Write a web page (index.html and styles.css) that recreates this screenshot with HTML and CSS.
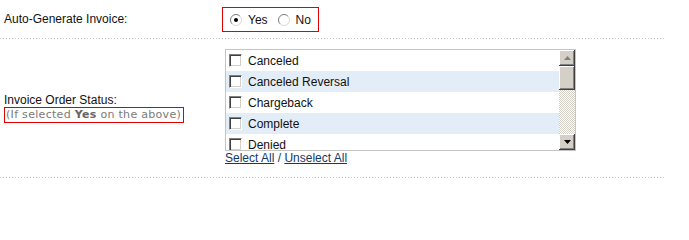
FILE: index.html
```html
<!DOCTYPE html>
<html>
<head>
<meta charset="utf-8">
<link rel="stylesheet" href="styles.css">
</head>
<body>
<div class="form">
  <div class="row">
    <div class="label">Auto-Generate Invoice:</div>
    <div class="field field-radio">
      <div class="radio-box">
        <label class="radio-item">
          <svg class="radio" width="12" height="12" viewBox="0 0 12 12"><circle cx="6" cy="6" r="5.5" fill="#fff"/><path d="M2.11 9.89 A5.5 5.5 0 0 1 9.89 2.11" fill="none" stroke="#7a7a7a"/><path d="M9.89 2.11 A5.5 5.5 0 0 1 2.11 9.89" fill="none" stroke="#d8d8d8"/><circle cx="6" cy="6" r="2" fill="#000"/></svg>
          <span>Yes</span>
        </label>
        <label class="radio-item">
          <svg class="radio" width="12" height="12" viewBox="0 0 12 12"><circle cx="6" cy="6" r="5.5" fill="#fff"/><path d="M2.11 9.89 A5.5 5.5 0 0 1 9.89 2.11" fill="none" stroke="#7a7a7a"/><path d="M9.89 2.11 A5.5 5.5 0 0 1 2.11 9.89" fill="none" stroke="#d8d8d8"/></svg>
          <span>No</span>
        </label>
      </div>
    </div>
  </div>
  <div class="row">
    <div class="label">
      <div>Invoice Order Status:</div>
      <div><span class="hint">(If selected <b>Yes</b> on the above)</span></div>
    </div>
    <div class="field field-list">
      <div class="listbox">
        <div class="options">
          <div class="opt"><span class="check"></span><span>Canceled</span></div>
          <div class="opt alt"><span class="check"></span><span>Canceled Reversal</span></div>
          <div class="opt"><span class="check"></span><span>Chargeback</span></div>
          <div class="opt alt"><span class="check"></span><span>Complete</span></div>
          <div class="opt"><span class="check"></span><span>Denied</span></div>
        </div>
        <div class="scrollbar">
          <div class="sb-btn"><svg width="7" height="4" viewBox="0 0 7 4"><polygon points="3.5,0 7,4 0,4" fill="#808080"/></svg></div>
          <div class="sb-thumb"></div>
          <div class="sb-track"></div>
          <div class="sb-btn"><svg width="7" height="4" viewBox="0 0 7 4"><polygon points="0,0 7,0 3.5,4" fill="#000"/></svg></div>
        </div>
      </div>
      <div class="links"><a href="#">Select All</a> / <a href="#">Unselect All</a></div>
    </div>
  </div>
</div>
</body>
</html>
```

FILE: styles.css
```css
html, body {
  margin: 0;
  padding: 0;
  background: #fff;
}

body {
  font-family: "Liberation Sans", Arial, sans-serif;
  font-size: 12px;
  line-height: 14px;
  color: #111;
}

.form {
  width: 665px;
}

.row {
  display: flex;
  padding-bottom: 1px;
  background-image: repeating-linear-gradient(to right, #c4c4c4 0 1px, transparent 1px 3px);
  background-size: 100% 1px;
  background-position: left bottom;
  background-repeat: no-repeat;
}

.label {
  width: 222px;
  flex: none;
  box-sizing: border-box;
  padding-left: 4px;
  display: flex;
  flex-direction: column;
  justify-content: center;
}

.field {
  flex: 1;
}

.field-radio {
  padding: 7px 0 6px 0;
}

.radio-box {
  display: inline-flex;
  align-items: center;
  box-sizing: border-box;
  height: 25px;
  border: 1px solid #e00000;
  padding: 0 7px 0 7px;
  gap: 10px;
}

.radio-item {
  display: inline-flex;
  align-items: center;
  gap: 6px;
}

.radio {
  display: block;
}

.hint {
  display: inline-block;
  border: 1px solid #e00000;
  padding: 0 2px 0 1px;
  font-family: "DejaVu Sans", Verdana, sans-serif;
  font-size: 11px;
  letter-spacing: 0.3px;
  line-height: 14px;
  color: #7a7a7a;
}

.hint b {
  color: #666;
}

.field-list {
  padding: 10px 0 12px 3px;
}

.listbox {
  display: flex;
  box-sizing: border-box;
  width: 351px;
  height: 102px;
  border: 1px solid #c4c4c4;
  overflow: hidden;
}

.options {
  flex: 1;
}

.opt {
  display: flex;
  align-items: center;
  height: 21px;
  padding-left: 3px;
  gap: 6px;
  color: #111;
}

.opt.alt {
  background: #e3edf7;
}

.check {
  display: block;
  box-sizing: border-box;
  width: 13px;
  height: 13px;
  background: #fff;
  border: 1px solid;
  border-color: #808080 #fff #fff #808080;
  box-shadow: inset 1px 1px 0 #404040, inset -1px -1px 0 #d4d0c8;
}

.scrollbar {
  width: 16px;
  flex: none;
  display: flex;
  flex-direction: column;
}

.sb-btn,
.sb-thumb {
  background: #d4d0c8;
  box-shadow: inset -1px -1px 0 #404040, inset 1px 1px 0 #fff, inset -2px -2px 0 #808080, inset 2px 2px 0 #d4d0c8;
}

.sb-btn {
  height: 16px;
  display: flex;
  align-items: center;
  justify-content: center;
}

.sb-btn svg {
  display: block;
}

.sb-thumb {
  height: 24px;
}

.sb-track {
  flex: 1;
  background-image: repeating-conic-gradient(#d4d0c8 0 25%, #fff 0 50%);
  background-size: 2px 2px;
}

.links {
  color: #0f3a6b;
}

.links a {
  color: #0f3a6b;
  text-decoration: underline;
}
```
